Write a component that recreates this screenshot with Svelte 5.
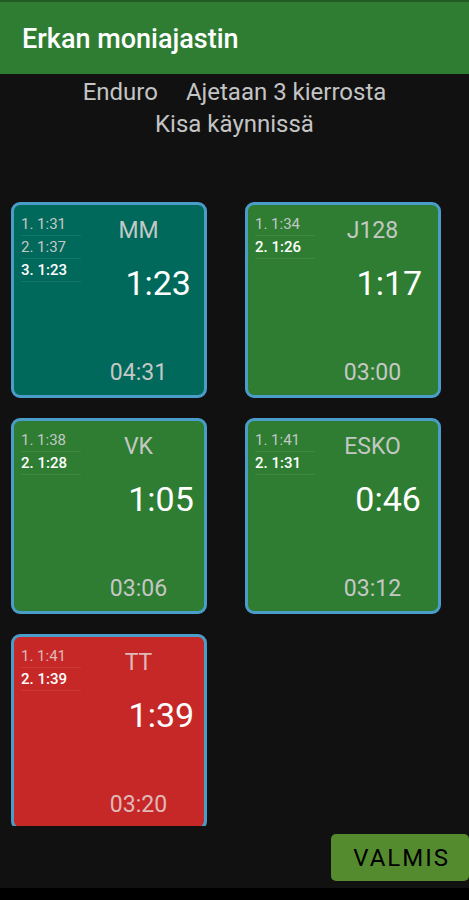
<script>
  const race = {
    type: "Enduro",
    target: "Ajetaan 3 kierrosta",
    status: "Kisa käynnissä",
  };

  let racers = [
    { name: "MM", laps: ["1:31", "1:37", "1:23"], current: "1:23", total: "04:31", state: "finished" },
    { name: "J128", laps: ["1:34", "1:26"], current: "1:17", total: "03:00", state: "running" },
    { name: "VK", laps: ["1:38", "1:28"], current: "1:05", total: "03:06", state: "running" },
    { name: "ESKO", laps: ["1:41", "1:31"], current: "0:46", total: "03:12", state: "running" },
    { name: "TT", laps: ["1:41", "1:39"], current: "1:39", total: "03:20", state: "late" },
  ];
</script>

<div class="app">
  <header>
    <h1>Erkan moniajastin</h1>
  </header>

  <div class="race-info">
    <p class="race-type"><span>{race.type}</span><span>{race.target}</span></p>
    <p>{race.status}</p>
  </div>

  <main>
    {#each racers as racer}
      <button class="card {racer.state}">
        <span class="laps">
          {#each racer.laps as lap, i}
            <span class="lap" class:latest={i === racer.laps.length - 1}>{i + 1}. {lap}</span>
          {/each}
        </span>
        <span class="times">
          <span class="name">{racer.name}</span>
          <span class="current">{racer.current}</span>
          <span class="total">{racer.total}</span>
        </span>
      </button>
    {/each}
  </main>

  <footer>
    <button class="done">VALMIS</button>
  </footer>
</div>

<style>
  :global(body) {
    margin: 0;
    background: #000;
  }

  .app {
    box-sizing: border-box;
    display: flex;
    flex-direction: column;
    height: 100vh;
    border-bottom: 12px solid #000;
    background: #111;
    color: #c4c4c4;
    font-family: Roboto, sans-serif;
    font-size: 24px;
  }

  header {
    padding: 20px 22px 18px;
    border-top: 2px solid #215c25;
    background: #2e7d32;
  }

  h1 {
    margin: 0;
    color: #fff;
    font-size: 27px;
    font-weight: 500;
    line-height: 34px;
  }

  .race-info {
    padding: 2px 0 62px;
    text-align: center;
    line-height: 32px;
  }

  .race-info p {
    margin: 0;
  }

  .race-type {
    display: flex;
    justify-content: center;
    gap: 28px;
  }

  main {
    flex: 1;
    min-height: 0;
    display: grid;
    grid-template-columns: 1fr 1fr;
    align-content: start;
    gap: 20px 38px;
    padding: 0 28px 0 11px;
    overflow-y: auto;
    scrollbar-width: none;
  }

  button {
    font-family: inherit;
    cursor: pointer;
  }

  .card {
    box-sizing: border-box;
    display: flex;
    aspect-ratio: 1;
    padding: 8px 4px 8px 7px;
    border: 3px solid #4a9cc9;
    border-radius: 9px;
    color: #c4c8c4;
    font-size: 23px;
    text-align: center;
  }

  .finished {
    background: #00695c;
  }

  .running {
    background: #2e7d32;
  }

  .late {
    background: #c62828;
    color: #e0b8b8;
  }

  .laps {
    width: 60px;
    margin-right: -4px;
    font-size: 15px;
    line-height: 22px;
    text-align: left;
  }

  .lap {
    display: block;
    border-bottom: 1px solid rgba(255, 255, 255, 0.08);
  }

  .latest {
    color: #fff;
    font-weight: 500;
  }

  /* the running time is centered between the name's left edge and the card's right side */
  .times {
    flex: 1;
    align-self: stretch;
    display: grid;
    grid-template-columns: minmax(0, 1fr) auto minmax(0, 1fr);
    grid-template-rows: 36px auto 1fr;
    justify-items: center;
  }

  .name {
    grid-column: 2;
    line-height: 36px;
  }

  .current {
    grid-column: 2 / 4;
    padding: 14px 2px 0 0;
    color: #fff;
    font-size: 34px;
    line-height: 40px;
  }

  .total {
    grid-column: 1 / 4;
    align-self: end;
    line-height: 28px;
  }

  footer {
    display: flex;
    justify-content: flex-end;
    padding: 8px 0 7px;
  }

  .done {
    height: 47px;
    padding: 0 19px 0 22px;
    border: none;
    border-radius: 5px;
    background: #558b2f;
    color: #000;
    font-size: 24px;
    letter-spacing: 2px;
  }
</style>
